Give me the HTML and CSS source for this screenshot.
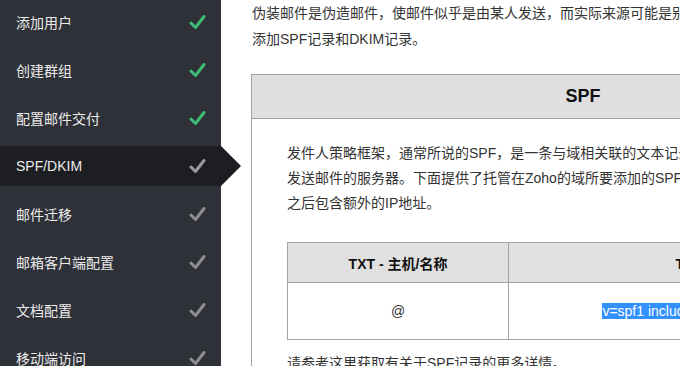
FILE: index.html
```html
<!DOCTYPE html>
<html lang="zh-CN">
<head>
<meta charset="utf-8">
<title>SPF/DKIM</title>
<link rel="stylesheet" href="styles.css">
</head>
<body>
<nav class="sidebar">
  <div class="item"><span>添加用户</span><svg class="check done" viewBox="0 0 17 16"><polyline points="2,9 6.5,13.5 15,2.5"/></svg></div>
  <div class="item"><span>创建群组</span><svg class="check done" viewBox="0 0 17 16"><polyline points="2,9 6.5,13.5 15,2.5"/></svg></div>
  <div class="item"><span>配置邮件交付</span><svg class="check done" viewBox="0 0 17 16"><polyline points="2,9 6.5,13.5 15,2.5"/></svg></div>
  <div class="item active"><span>SPF/DKIM</span><svg class="check" viewBox="0 0 17 16"><polyline points="2,9 6.5,13.5 15,2.5"/></svg></div>
  <div class="item"><span>邮件迁移</span><svg class="check" viewBox="0 0 17 16"><polyline points="2,9 6.5,13.5 15,2.5"/></svg></div>
  <div class="item"><span>邮箱客户端配置</span><svg class="check" viewBox="0 0 17 16"><polyline points="2,9 6.5,13.5 15,2.5"/></svg></div>
  <div class="item"><span>文档配置</span><svg class="check" viewBox="0 0 17 16"><polyline points="2,9 6.5,13.5 15,2.5"/></svg></div>
  <div class="item"><span>移动端访问</span><svg class="check" viewBox="0 0 17 16"><polyline points="2,9 6.5,13.5 15,2.5"/></svg></div>
</nav>
<main class="content">
  <p class="intro">伪装邮件是伪造邮件，使邮件似乎是由某人发送，而实际来源可能是别人。为了防止您的域被用于发送伪装邮件，您需要<br>添加SPF记录和DKIM记录。</p>
  <section class="box">
    <h2 class="box-title">SPF</h2>
    <div class="box-body">
      <p class="desc">发件人策略框架，通常所说的SPF，是一条与域相关联的文本记录，用于列出被授权代表该域<br>发送邮件的服务器。下面提供了托管在Zoho的域所要添加的SPF记录。如果需要，可以在include<br>之后包含额外的IP地址。</p>
      <table class="records">
        <thead>
          <tr><th class="col-host">TXT - 主机/名称</th><th class="col-value">TXT - 值</th></tr>
        </thead>
        <tbody>
          <tr><td>@</td><td><span class="selected">v=spf1 include:zoho.com.cn ~all</span></td></tr>
        </tbody>
      </table>
      <p class="more">请参考这里获取有关于SPF记录的更多详情。</p>
    </div>
  </section>
</main>
</body>
</html>
```

FILE: styles.css
```css
html, body {
  margin: 0;
  padding: 0;
  height: 100%;
}
body {
  display: flex;
  overflow: hidden;
  background: #fff;
  font-family: "Liberation Sans", Arial, "Noto Sans CJK SC", sans-serif;
  font-size: 14px;
  color: #333;
}
.sidebar {
  flex: 0 0 221px;
  width: 221px;
  background: #2f3138;
  padding-top: 2px;
  display: flex;
  flex-direction: column;
  gap: 8px;
  box-sizing: border-box;
}
.item {
  position: relative;
  height: 40px;
  padding: 0 15px 0 16px;
  display: flex;
  align-items: center;
  justify-content: space-between;
  color: #ececec;
  font-size: 14px;
  flex-shrink: 0;
}
.item.active {
  background: #1d1e22;
}
.item.active::after {
  content: "";
  position: absolute;
  right: -20px;
  top: 0;
  border-top: 20px solid transparent;
  border-bottom: 20px solid transparent;
  border-left: 20px solid #1d1e22;
}
.check {
  width: 17px;
  height: 16px;
  fill: none;
  stroke: #8d8d8f;
  stroke-width: 3;
  stroke-linecap: round;
  stroke-linejoin: round;
}
.check.done {
  stroke: #3dbb72;
}
.item.active .check {
  stroke: #9a9a9c;
}
.content {
  flex: 0 0 auto;
  margin-left: 30px;
  width: 664px;
}
.intro {
  margin: 0 0 22px 1px;
  line-height: 26px;
  white-space: nowrap;
}
.box {
  border: 1px solid #a3a3a3;
  width: 664px;
  box-sizing: border-box;
}
.box-title {
  margin: 0;
  height: 43px;
  line-height: 43px;
  background: #dfdfdf;
  border-bottom: 1px solid #a3a3a3;
  text-align: center;
  font-size: 18px;
  font-weight: bold;
  color: #111;
}
.box-body {
  padding: 22px 0 0 35px;
}
.desc {
  margin: 0 0 26px;
  line-height: 25px;
  white-space: nowrap;
}
.records {
  border-collapse: collapse;
  width: 609px;
}
.records th, .records td {
  border: 1px solid #a3a3a3;
  text-align: center;
  padding: 0;
}
.records th {
  background: #e0e0e0;
  height: 39px;
  font-weight: bold;
  color: #111;
}
.records td {
  height: 56px;
  white-space: nowrap;
}
.col-host {
  width: 220px;
}
.selected {
  background: #3390ff;
  color: #fff;
}
.more {
  margin: 11px 0 0;
  line-height: 25px;
  white-space: nowrap;
}
```
